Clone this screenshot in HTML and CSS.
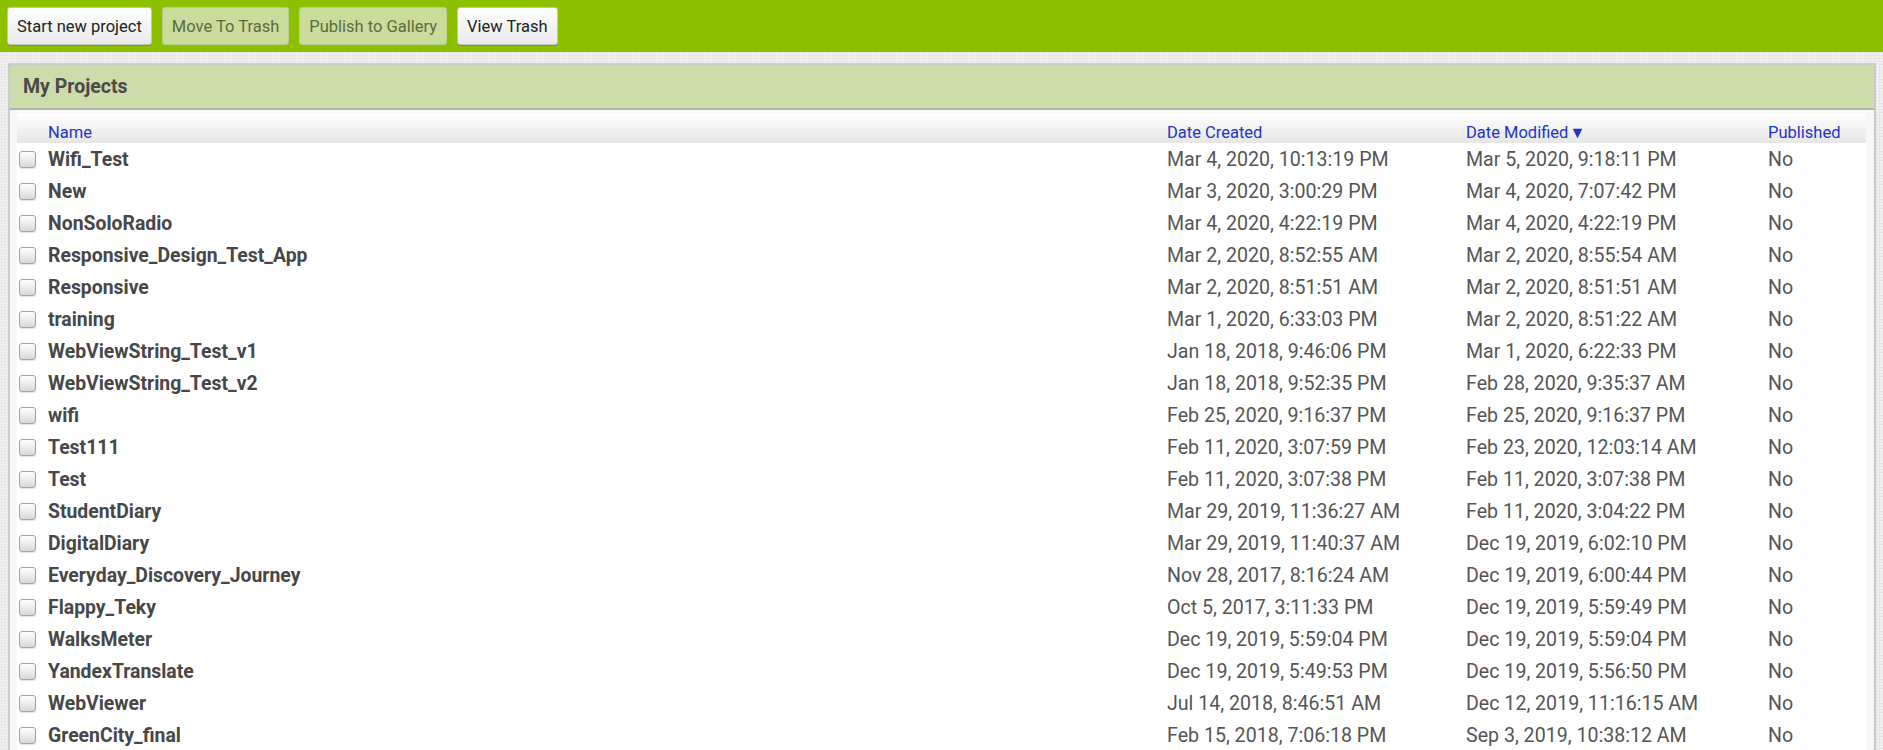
FILE: index.html
```html
<!DOCTYPE html>
<html>
<head>
<meta charset="utf-8">
<link rel="stylesheet" href="styles.css">
</head>
<body>
<div class="toolbar">
  <button class="btn">Start new project</button>
  <button class="btn btn-disabled">Move To Trash</button>
  <button class="btn btn-disabled">Publish to Gallery</button>
  <button class="btn">View Trash</button>
</div>
<div class="panel">
  <div class="panel-header">My Projects</div>
  <div class="panel-body">
    <div class="table">
      <div class="row head">
        <div class="cell"></div>
        <div class="cell">Name</div>
        <div class="cell">Date Created</div>
        <div class="cell">Date Modified<span class="sort">▼</span></div>
        <div class="cell">Published</div>
      </div>
      <div class="row"><div class="cell"><span class="cb"></span></div><div class="cell name">Wifi_Test</div><div class="cell">Mar 4, 2020, 10:13:19 PM</div><div class="cell">Mar 5, 2020, 9:18:11 PM</div><div class="cell">No</div></div>
      <div class="row"><div class="cell"><span class="cb"></span></div><div class="cell name">New</div><div class="cell">Mar 3, 2020, 3:00:29 PM</div><div class="cell">Mar 4, 2020, 7:07:42 PM</div><div class="cell">No</div></div>
      <div class="row"><div class="cell"><span class="cb"></span></div><div class="cell name">NonSoloRadio</div><div class="cell">Mar 4, 2020, 4:22:19 PM</div><div class="cell">Mar 4, 2020, 4:22:19 PM</div><div class="cell">No</div></div>
      <div class="row"><div class="cell"><span class="cb"></span></div><div class="cell name">Responsive_Design_Test_App</div><div class="cell">Mar 2, 2020, 8:52:55 AM</div><div class="cell">Mar 2, 2020, 8:55:54 AM</div><div class="cell">No</div></div>
      <div class="row"><div class="cell"><span class="cb"></span></div><div class="cell name">Responsive</div><div class="cell">Mar 2, 2020, 8:51:51 AM</div><div class="cell">Mar 2, 2020, 8:51:51 AM</div><div class="cell">No</div></div>
      <div class="row"><div class="cell"><span class="cb"></span></div><div class="cell name">training</div><div class="cell">Mar 1, 2020, 6:33:03 PM</div><div class="cell">Mar 2, 2020, 8:51:22 AM</div><div class="cell">No</div></div>
      <div class="row"><div class="cell"><span class="cb"></span></div><div class="cell name">WebViewString_Test_v1</div><div class="cell">Jan 18, 2018, 9:46:06 PM</div><div class="cell">Mar 1, 2020, 6:22:33 PM</div><div class="cell">No</div></div>
      <div class="row"><div class="cell"><span class="cb"></span></div><div class="cell name">WebViewString_Test_v2</div><div class="cell">Jan 18, 2018, 9:52:35 PM</div><div class="cell">Feb 28, 2020, 9:35:37 AM</div><div class="cell">No</div></div>
      <div class="row"><div class="cell"><span class="cb"></span></div><div class="cell name">wifi</div><div class="cell">Feb 25, 2020, 9:16:37 PM</div><div class="cell">Feb 25, 2020, 9:16:37 PM</div><div class="cell">No</div></div>
      <div class="row"><div class="cell"><span class="cb"></span></div><div class="cell name">Test111</div><div class="cell">Feb 11, 2020, 3:07:59 PM</div><div class="cell">Feb 23, 2020, 12:03:14 AM</div><div class="cell">No</div></div>
      <div class="row"><div class="cell"><span class="cb"></span></div><div class="cell name">Test</div><div class="cell">Feb 11, 2020, 3:07:38 PM</div><div class="cell">Feb 11, 2020, 3:07:38 PM</div><div class="cell">No</div></div>
      <div class="row"><div class="cell"><span class="cb"></span></div><div class="cell name">StudentDiary</div><div class="cell">Mar 29, 2019, 11:36:27 AM</div><div class="cell">Feb 11, 2020, 3:04:22 PM</div><div class="cell">No</div></div>
      <div class="row"><div class="cell"><span class="cb"></span></div><div class="cell name">DigitalDiary</div><div class="cell">Mar 29, 2019, 11:40:37 AM</div><div class="cell">Dec 19, 2019, 6:02:10 PM</div><div class="cell">No</div></div>
      <div class="row"><div class="cell"><span class="cb"></span></div><div class="cell name">Everyday_Discovery_Journey</div><div class="cell">Nov 28, 2017, 8:16:24 AM</div><div class="cell">Dec 19, 2019, 6:00:44 PM</div><div class="cell">No</div></div>
      <div class="row"><div class="cell"><span class="cb"></span></div><div class="cell name">Flappy_Teky</div><div class="cell">Oct 5, 2017, 3:11:33 PM</div><div class="cell">Dec 19, 2019, 5:59:49 PM</div><div class="cell">No</div></div>
      <div class="row"><div class="cell"><span class="cb"></span></div><div class="cell name">WalksMeter</div><div class="cell">Dec 19, 2019, 5:59:04 PM</div><div class="cell">Dec 19, 2019, 5:59:04 PM</div><div class="cell">No</div></div>
      <div class="row"><div class="cell"><span class="cb"></span></div><div class="cell name">YandexTranslate</div><div class="cell">Dec 19, 2019, 5:49:53 PM</div><div class="cell">Dec 19, 2019, 5:56:50 PM</div><div class="cell">No</div></div>
      <div class="row"><div class="cell"><span class="cb"></span></div><div class="cell name">WebViewer</div><div class="cell">Jul 14, 2018, 8:46:51 AM</div><div class="cell">Dec 12, 2019, 11:16:15 AM</div><div class="cell">No</div></div>
      <div class="row"><div class="cell"><span class="cb"></span></div><div class="cell name">GreenCity_final</div><div class="cell">Feb 15, 2018, 7:06:18 PM</div><div class="cell">Sep 3, 2019, 10:38:12 AM</div><div class="cell">No</div></div>
    </div>
  </div>
</div>
</body>
</html>
```
FILE: styles.css
```css
html, body {
  margin: 0;
  padding: 0;
}
body {
  font-family: Roboto, "Liberation Sans", sans-serif;
  background-color: #eeeeee;
  background-image: radial-gradient(#d9d9d9 0.9px, transparent 1px);
  background-size: 3px 3px;
  height: 750px;
  overflow: hidden;
}
.toolbar {
  height: 52px;
  box-sizing: border-box;
  background: #8dc000;
  padding: 7px 7px 0 7px;
  display: flex;
  gap: 10px;
  align-items: flex-start;
}
.btn {
  height: 38px;
  font-family: Roboto, "Liberation Sans", sans-serif;
  font-size: 16.5px;
  color: #222;
  padding: 0 9px;
  border: 1px solid #c4c4c4;
  border-radius: 3px;
  background: linear-gradient(#ffffff, #e9e9e9);
  box-shadow: 0 1px 1px rgba(0,0,0,0.15);
}
.btn-disabled {
  background: #c9dc9c;
  border-color: #b9cd8c;
  color: #5b6b3c;
  box-shadow: none;
}
.panel {
  margin: 11px 7px 0 8px;
  border: 2px solid #cbcbcb;
  border-bottom: none;
  background: #f7f7f3;
}
.panel-header {
  height: 45px;
  box-sizing: border-box;
  background: #cddcab;
  border-bottom: 2px solid #b3b5ab;
  padding: 0 13px;
  display: flex;
  align-items: center;
  font-weight: bold;
  font-size: 19.5px;
  color: #4a4a4a;
}
.panel-body {
  padding: 3px 8px 0 7px;
}
.table {
  display: flex;
  flex-direction: column;
  background: #ffffff;
}
.row {
  display: grid;
  grid-template-columns: 31px 1119px 299px 302px 1fr;
  height: 32px;
  align-items: center;
  font-size: 19.6px;
  color: #555555;
}
.row.head {
  height: 30px;
  align-items: end;
  padding-bottom: 1px;
  box-sizing: border-box;
  background: linear-gradient(#ffffff, #e6e6e6);
  font-size: 16.5px;
  color: #1f33c8;
}
.cell {
  white-space: nowrap;
  display: flex;
  align-items: center;
}
.sort {
  font-size: 16px;
  margin-left: 1px;
}
.name {
  font-weight: bold;
  font-size: 19.4px;
  color: #474747;
}
.cb {
  display: block;
  width: 15px;
  height: 15px;
  margin-left: 2px;
  border: 1px solid #a3a3a3;
  border-radius: 3px;
  background: linear-gradient(#fdfdfd, #dadada);
  box-shadow: 0 1px 1px rgba(0,0,0,0.12);
}
```
